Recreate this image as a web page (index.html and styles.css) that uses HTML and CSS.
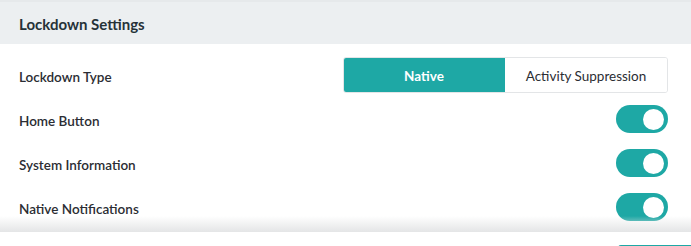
FILE: index.html
```html
<!DOCTYPE html>
<html lang="en">
<head>
<meta name="viewport" content="width=device-width, initial-scale=1">
<title>Lockdown Settings</title>
<link rel="stylesheet" href="styles.css">
</head>
<body>

<div class="panel">
    <div class="panel-header">Lockdown Settings</div>

    <div class="panel-body">
        <div class="setting-row">
            <span class="setting-label">Lockdown Type</span>
            <div class="segmented">
                <button class="segment active">Native</button>
                <button class="segment">Activity Suppression</button>
            </div>
        </div>
        <div class="setting-row">
            <span class="setting-label">Home Button</span>
            <label class="switch"><input type="checkbox" checked><span class="slider"></span></label>
        </div>
        <div class="setting-row">
            <span class="setting-label">System Information</span>
            <label class="switch"><input type="checkbox" checked><span class="slider"></span></label>
        </div>
        <div class="setting-row">
            <span class="setting-label">Native Notifications</span>
            <label class="switch"><input type="checkbox" checked><span class="slider"></span></label>
        </div>
    </div>
</div>

<div class="footer">
    <div class="saveBtn"></div>
</div>

</body>
</html>
```

FILE: styles.css
```css
* {
    box-sizing: border-box;
}

body {
    margin: 0;
    font-family: 'Lato', 'Liberation Sans', sans-serif;
    color: #2b2d33;
    background: #fff;
    height: 246px;
    overflow: hidden;
}

.panel {
    position: relative;
    height: 232px;
    overflow: hidden;
}

/* fade at the bottom of the scroll area */
.panel::after {
    content: '';
    position: absolute;
    left: 0;
    right: 0;
    bottom: 0;
    height: 16px;
    background: linear-gradient(to bottom, rgba(255, 255, 255, 0), #e4e5e6);
}

.panel-header {
    height: 44px;
    display: flex;
    align-items: center;
    padding: 2px 0 0 19px;
    background-color: #eceff1;
    border-top: 2px solid #e6e9eb;
    font-size: 15px;
    font-weight: bold;
    color: #263238;
}

.panel-body {
    padding: 9px 23px 0 19px;
}

.setting-row {
    height: 44px;
    display: flex;
    align-items: center;
    justify-content: space-between;
}

.setting-label {
    font-size: 13.5px;
    font-weight: 600;
    padding-top: 3px;
}

.segmented {
    display: flex;
    width: 325px;
    height: 36px;
    border: 1px solid #e3e5e7;
    border-radius: 3px;
    overflow: hidden;
}

.segment {
    flex: 1;
    border: none;
    background: #fff;
    font-family: inherit;
    font-size: 13.5px;
    color: #2b2d33;
    cursor: pointer;
    padding: 2px 0 0;
}

.segment.active {
    background-color: #1ea8a5;
    color: #fff;
    font-weight: bold;
    margin: -1px 0 -1px -1px;
}

.switch {
    position: relative;
    display: inline-block;
    width: 52px;
    height: 28px;
}

.switch input {
    display: none;
}

.slider {
    position: absolute;
    inset: 0;
    background-color: #ccc;
    border-radius: 14px;
    cursor: pointer;
}

.slider::before {
    content: '';
    position: absolute;
    width: 21px;
    height: 21px;
    top: 3.5px;
    left: 4px;
    background: #fff;
    border-radius: 50%;
    transition: transform 0.2s ease;
}

.switch input:checked + .slider {
    background-color: #1ea8a5;
}

.switch input:checked + .slider::before {
    transform: translateX(23px);
}

.footer {
    height: 14px;
    position: relative;
}

.saveBtn {
    position: absolute;
    top: 13px;
    left: 618px;
    width: 90px;
    height: 36px;
    border-radius: 3px;
    background-color: #1ea8a5;
}
```
